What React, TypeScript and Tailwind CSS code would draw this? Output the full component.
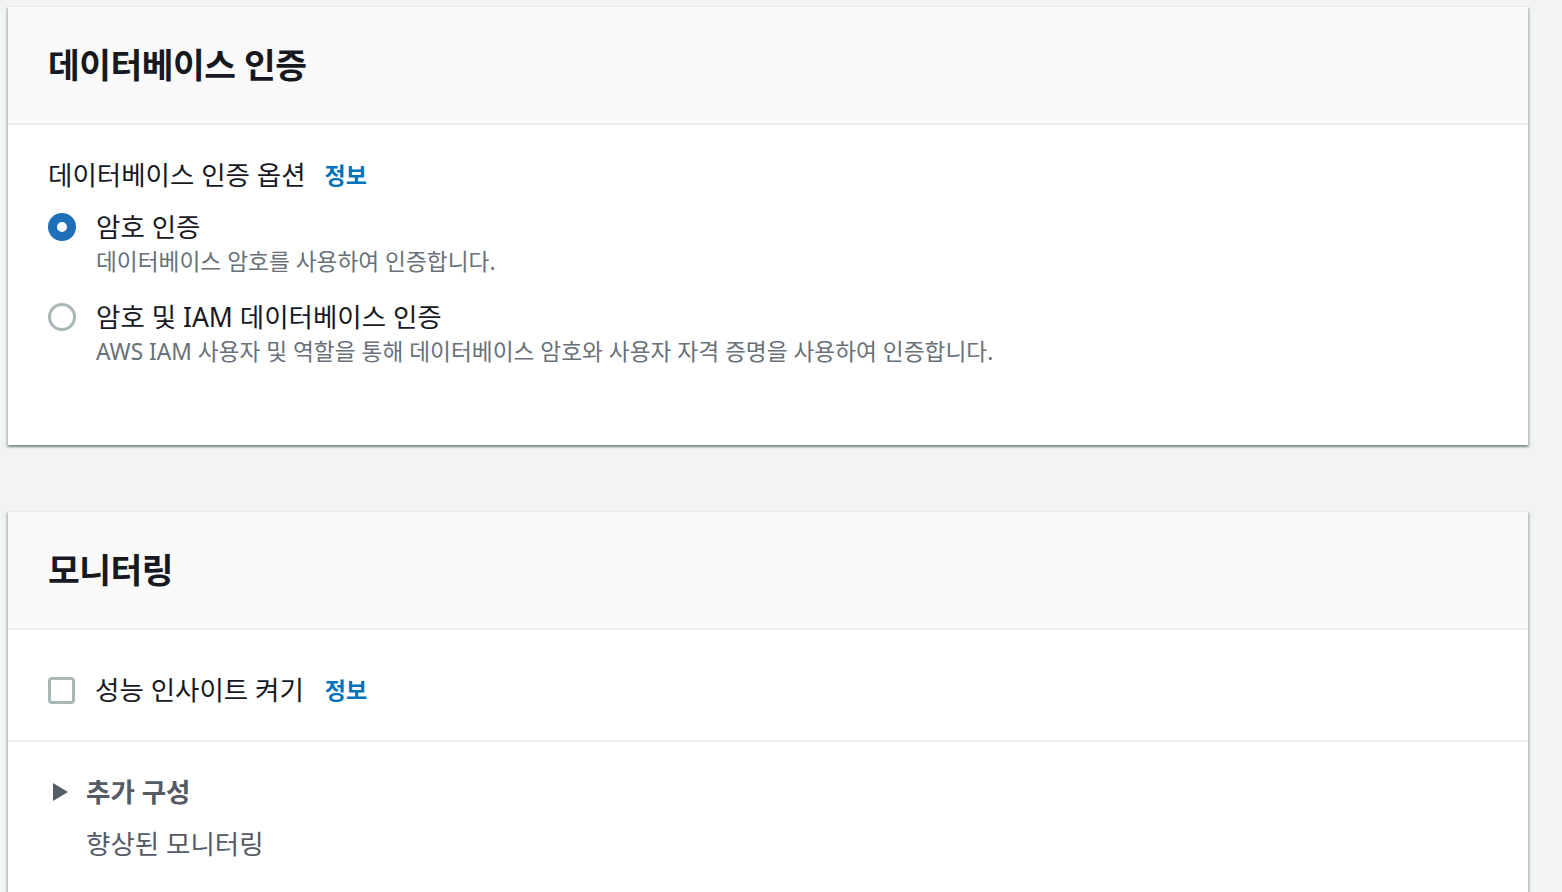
const font = "font-['Noto_Sans','Noto_Sans_CJK_KR',sans-serif]"

function Radio({ checked }: { checked: boolean }) {
  return checked ? (
    <span className="mt-[3px] block w-[28px] h-[28px] shrink-0 rounded-full border-[9px] border-[#1f6fb8] bg-white" />
  ) : (
    <span className="mt-[3px] block w-[28px] h-[28px] shrink-0 rounded-full border-[3px] border-[#aab7b8] bg-white" />
  )
}

function Info({ gap = "ml-[21px]" }: { gap?: string }) {
  return <a className={`${gap} text-[23px] font-bold text-[#0073bb] leading-[34px]`}>정보</a>
}

function CardHeader({ title }: { title: string }) {
  return (
    <div className="h-[119px] flex items-center px-[40px] bg-[#fafafa] border-t border-[#eaeded] border-b-2">
      <h2 className="text-[34.5px] font-bold text-[#16191f] tracking-[-0.5px]">{title}</h2>
    </div>
  )
}

const cardClass =
  "bg-white shadow-[0_2px_2px_0_rgba(0,28,36,0.3),2px_2px_2px_0_rgba(0,28,36,0.15),-2px_2px_2px_0_rgba(0,28,36,0.15)]"

function RadioOption({ checked, label, desc }: { checked: boolean; label: string; desc: string }) {
  return (
    <label className="flex gap-[20px]">
      <Radio checked={checked} />
      <div className="flex flex-col">
        <span className="text-[26.5px] leading-[34px] text-[#16191f]">{label}</span>
        <span className="text-[22.7px] leading-[36px] text-[#687078]">{desc}</span>
      </div>
    </label>
  )
}

export default function App() {
  return (
    <div className={`${font} min-h-screen bg-[#f2f3f3] pt-[6px] pl-[8px] pr-[34px] flex flex-col gap-[66px]`}>
      <section className={cardClass}>
        <CardHeader title="데이터베이스 인증" />
        <div className="px-[40px] pt-[33px] pb-[75px] flex flex-col">
          <div className="flex items-center mb-[18px]">
            <span className="text-[26.5px] leading-[30px] text-[#16191f]">데이터베이스 인증 옵션</span>
            <Info gap="ml-[19px]" />
          </div>
          <div className="flex flex-col gap-[20px]">
            <RadioOption checked label="암호 인증" desc="데이터베이스 암호를 사용하여 인증합니다." />
            <RadioOption
              checked={false}
              label="암호 및 IAM 데이터베이스 인증"
              desc="AWS IAM 사용자 및 역할을 통해 데이터베이스 암호와 사용자 자격 증명을 사용하여 인증합니다."
            />
          </div>
        </div>
      </section>

      <section className={`${cardClass} flex-1`}>
        <CardHeader title="모니터링" />
        <div className="px-[40px] pt-[43px] pb-[33px] border-b-2 border-[#eaeded] flex items-center">
          <span className="block w-[27px] h-[27px] rounded-[4px] border-[3px] border-[#aab7b8] bg-white" />
          <span className="ml-[20px] text-[26.5px] leading-[34px] text-[#16191f]">성능 인사이트 켜기</span>
          <Info />
        </div>
        <div className="px-[40px] pt-[33px] flex flex-col">
          <div className="flex items-center">
            <svg width="18" height="20" viewBox="0 0 18 20" className="ml-[4px] mr-[16px]">
              <path d="M1 1 L16 10 L1 19 Z" fill="#545b64" />
            </svg>
            <span className="text-[26.5px] leading-[34px] font-bold text-[#545b64]">추가 구성</span>
          </div>
          <span className="mt-[18px] ml-[38px] text-[26.5px] leading-[34px] text-[#545b64]">향상된 모니터링</span>
        </div>
      </section>
    </div>
  )
}
